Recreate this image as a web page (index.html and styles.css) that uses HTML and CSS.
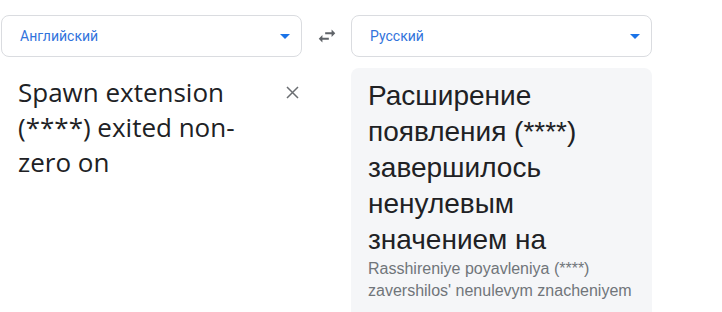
FILE: index.html
```html
<!DOCTYPE html>
<html lang="ru">
<head>
    <meta charset="UTF-8">
    <meta name="viewport" content="width=device-width, initial-scale=1.0">
    <title>Переводчик</title>
    <link rel="stylesheet" href="styles.css">
</head>
<body>
    <div class="translator">
        <div class="lang-select">
            <span class="lang-name">Английский</span>
            <svg class="drop" width="10" height="5" viewBox="0 0 10 5"><path d="M0 0l5 5 5-5z"/></svg>
        </div>

        <button class="swap" type="button" title="Поменять языки">
            <svg width="22" height="22" viewBox="0 0 24 24"><path d="M6.99 11L3 15l3.99 4v-3H14v-2H6.99v-3zM21 9l-3.99-4v3H10v2h7.01v3L21 9z"/></svg>
        </button>

        <div class="lang-select">
            <span class="lang-name">Русский</span>
            <svg class="drop" width="10" height="5" viewBox="0 0 10 5"><path d="M0 0l5 5 5-5z"/></svg>
        </div>

        <div class="source">
            <p class="source-text">Spawn extension (****) exited non-zero on</p>
            <button class="clear" type="button" title="Очистить">
                <svg width="13" height="13" viewBox="0 0 13 13"><path d="M1 1l11 11M12 1l-11 11"/></svg>
            </button>
        </div>

        <div></div>

        <div class="target">
            <p class="target-text">Расширение появления (****) завершилось ненулевым значением на</p>
            <p class="translit">Rasshireniye poyavleniya (****) zavershilos' nenulevym znacheniyem</p>
        </div>
    </div>
</body>
</html>
```

FILE: styles.css
```css
body {
    margin: 0;
    padding: 0;
    background-color: #fff;
    font-family: "Liberation Sans", Arial, sans-serif;
    color: #202124;
}

.translator {
    display: grid;
    grid-template-columns: 301px 49px 301px;
    row-gap: 11px;
    padding: 15px 0 0 1px;
}

.lang-select {
    display: flex;
    align-items: center;
    justify-content: space-between;
    height: 42px;
    box-sizing: border-box;
    border: 1px solid #dadce0;
    border-radius: 8px;
    padding: 0 11px 0 18px;
}

.lang-name {
    font-family: Roboto, sans-serif;
    font-size: 14px;
    color: #3273dc;
}

.drop {
    fill: #1a73e8;
}

.swap {
    display: flex;
    align-items: center;
    justify-content: center;
    background: none;
    border: none;
    padding: 0;
    cursor: pointer;
}

.swap svg {
    fill: #5f6368;
}

.source {
    display: flex;
    align-items: flex-start;
    gap: 10px;
    padding: 7px 0 0 17px;
}

.source-text {
    flex: 1;
    margin: 0;
    font-family: "Open Sans", sans-serif;
    font-size: 26px;
    line-height: 35px;
    color: #202124;
}

.clear {
    width: 20px;
    height: 20px;
    margin-top: 7px;
    padding: 0;
    background: none;
    border: none;
    display: flex;
    align-items: center;
    justify-content: center;
    cursor: pointer;
}

.clear svg {
    stroke: #6b6e72;
    stroke-width: 1.5;
}

.target {
    background-color: #f5f6f8;
    border-radius: 8px 8px 0 0;
    padding: 10px 17px 20px 17px;
}

.target-text {
    margin: 0;
    font-size: 28px;
    line-height: 36px;
}

.translit {
    margin: 0;
    font-size: 16px;
    line-height: 22px;
    color: #70757a;
}
```
